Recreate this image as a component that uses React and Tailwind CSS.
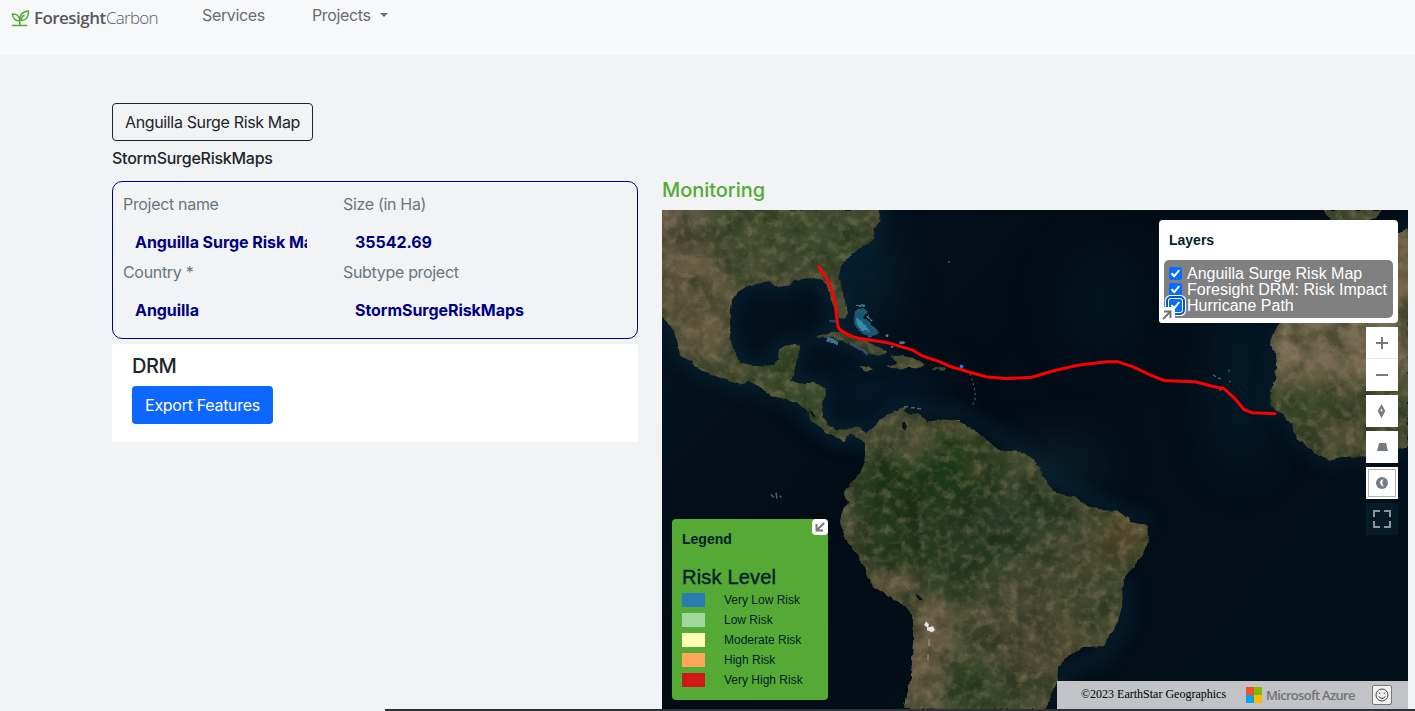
import React from "react";

const NORTH_AMERICA =
  "M655 205 L876 205 L880 212 L879 222 L874 230 L873 240 L862 247 L850 256 L841 266 L839 276 L842 290 L846 303 L848 313 L844 319 L838 318 L835 309 L831 301 L830 293 L826 285 L820 280 L812 278 L805 279 L795 281 L788 286 L778 287 L767 282 L757 284 L748 286 L738 292 L732 300 L731 310 L730 325 L731 340 L736 354 L742 363 L752 366 L765 367 L773 365 L778 360 L779 350 L785 346 L795 344 L801 345 L799 352 L796 363 L794 372 L791 381 L800 384 L812 383 L820 385 L825 391 L824 400 L822 410 L824 419 L829 427 L838 431 L848 429 L858 427 L867 433 L870 442 L866 446 L860 438 L850 434 L844 442 L836 438 L827 434 L820 427 L812 423 L807 412 L797 403 L783 399 L770 396 L760 387 L748 381 L740 385 L720 378 L700 370 L690 361 L680 356 L677 340 L670 325 L655 310 Z";
const SOUTH_AMERICA =
  "M864 434 L873 429 L880 420 L889 415 L899 409 L905 407 L904 413 L920 415 L928 422 L944 420 L962 422 L973 430 L982 437 L991 444 L999 451 L1017 452 L1030 457 L1040 467 L1043 477 L1048 485 L1057 494 L1075 497 L1087 507 L1105 511 L1117 511 L1133 523 L1147 527 L1149 542 L1142 557 L1131 570 L1123 580 L1122 607 L1117 626 L1108 639 L1103 647 L1083 648 L1069 656 L1058 668 L1057 683 L1045 711 L904 711 L911 678 L913 643 L913 617 L905 606 L890 598 L873 587 L865 569 L857 554 L846 541 L840 523 L842 512 L848 503 L844 495 L850 484 L860 474 L865 462 L865 448 Z";
const AFRICA =
  "M1284 318 L1277 327 L1271 338 L1270 346 L1275 352 L1276 368 L1275 382 L1270 392 L1271 407 L1282 415 L1292 425 L1296 439 L1308 448 L1318 455 L1331 461 L1346 457 L1365 457 L1388 450 L1410 448 L1410 228 L1394 234 L1370 240 L1320 245 Z";
const IBERIA = "M1322 205 L1326 216 L1336 222 L1366 222 L1378 215 L1386 205 Z";
const CUBA =
  "M817 338 L823 334 L833 332 L846 333 L856 337 L868 342 L880 348 L887 353 L878 356 L865 353 L857 347 L845 342 L832 338 Z";
const HISPANIOLA =
  "M891 356 L901 356 L913 358 L925 365 L920 368 L909 367 L901 370 L887 367 L898 364 Z";
const ISLANDS =
  "M859 367 L868 366 L873 370 L864 371 Z M934 367 L946 368 L944 371 L933 370 Z";

const HURRICANE =
  "M819 267 L827 279 L831 288 L835 303 L836 312 L838 327 L840 330 L850 336 L861 339 L888 343 L912 350 L922 356 L940 362 L951 367 L968 372 L986 377 L1007 379 L1032 377.500 L1054 371 L1078 365.500 L1107 362 L1118 362 L1133 367 L1150 375 L1165 381 L1195 382 L1212 386.500 L1224 389 L1235 399 L1244 410 L1252 413 L1275 414";

const patches = [
  [670, 250, 50, 60, "#665943", 0.75],
  [700, 310, 32, 50, "#706149", 0.7],
  [680, 225, 24, 26, "#6b5e4e", 0.6],
  [770, 225, 70, 32, "#434f31", 0.6],
  [835, 245, 40, 26, "#3a492c", 0.65],
  [770, 380, 50, 18, "#48522f", 0.7],
  [812, 400, 24, 26, "#354a28", 0.8],
  [785, 360, 20, 16, "#354827", 0.8],
  [935, 480, 70, 45, "#1c3a19", 0.95],
  [900, 520, 50, 55, "#20381a", 0.9],
  [955, 540, 60, 50, "#26391f", 0.8],
  [1020, 520, 55, 40, "#293b26", 0.8],
  [910, 448, 25, 14, "#645b43", 0.8],
  [955, 428, 30, 8, "#5f5739", 0.7],
  [980, 468, 8, 7, "#97785a", 0.9],
  [1000, 610, 60, 35, "#4f4d37", 0.75],
  [1040, 650, 50, 35, "#4c4833", 0.75],
  [1070, 560, 40, 40, "#474931", 0.7],
  [1125, 535, 22, 26, "#635235", 0.85],
  [930, 650, 24, 65, "#70604a", 0.9],
  [893, 582, 34, 13, "#6e5f48", 0.85],
  [970, 690, 32, 30, "#314226", 0.8],
  [955, 592, 40, 12, "#304023", 0.8],
  [858, 540, 8, 28, "#615a46", 0.8],
  [1340, 350, 75, 40, "#7d6e57", 0.95],
  [1330, 385, 55, 12, "#565338", 0.7],
  [1305, 410, 40, 24, "#384728", 0.9],
  [1355, 430, 50, 22, "#4f4e33", 0.8],
  [1395, 270, 40, 50, "#7a694d", 0.9],
];

const legend = [
  ["Very Low Risk", "bg-[#2b7bb5]"],
  ["Low Risk", "bg-[#a0d99b]"],
  ["Moderate Risk", "bg-[#ffffb5]"],
  ["High Risk", "bg-[#fea658]"],
  ["Very High Risk", "bg-[#d01719]"],
];

function Satellite() {
  return (
    <svg className="block h-full w-full" viewBox="662 210 746 500" preserveAspectRatio="none">
      <defs>
        <clipPath id="land">
          {[NORTH_AMERICA, SOUTH_AMERICA, AFRICA, IBERIA, CUBA, HISPANIOLA, ISLANDS].map((d) => (
            <path key={d} d={d} />
          ))}
        </clipPath>
        <filter id="soft" x="-50%" y="-50%" width="200%" height="200%" colorInterpolationFilters="sRGB">
          <feGaussianBlur stdDeviation="9" />
        </filter>
        <filter id="haze" filterUnits="userSpaceOnUse" x="600" y="150" width="870" height="620" colorInterpolationFilters="sRGB">
          <feGaussianBlur stdDeviation="22" />
        </filter>
        <filter id="shelf" x="-20%" y="-20%" width="140%" height="140%" colorInterpolationFilters="sRGB">
          <feGaussianBlur stdDeviation="8" />
        </filter>
        <filter id="rough" x="-5%" y="-5%" width="110%" height="110%" colorInterpolationFilters="sRGB">
          <feTurbulence type="fractalNoise" baseFrequency="0.14" numOctaves="3" seed="4" />
          <feDisplacementMap in="SourceGraphic" scale="4" xChannelSelector="R" yChannelSelector="G" />
        </filter>
        <filter id="light" x="0" y="0" width="100%" height="100%" colorInterpolationFilters="sRGB">
          <feTurbulence type="fractalNoise" baseFrequency="0.11" numOctaves="5" seed="11" />
          <feColorMatrix values="0 0 0 0 0.62  0 0 0 0 0.56  0 0 0 0 0.43  2.2 0 0 0 -0.95" />
        </filter>
        <filter id="dark" x="0" y="0" width="100%" height="100%" colorInterpolationFilters="sRGB">
          <feTurbulence type="fractalNoise" baseFrequency="0.04" numOctaves="6" seed="27" />
          <feColorMatrix values="0 0 0 0 0.08  0 0 0 0 0.14  0 0 0 0 0.06  0 2.6 0 0 -1" />
        </filter>
        <linearGradient id="sea" x1="0" y1="0" x2="1" y2="0.6">
          <stop offset="0" stopColor="#041522" />
          <stop offset="0.45" stopColor="#020c16" />
          <stop offset="0.7" stopColor="#020e18" />
          <stop offset="1" stopColor="#02101b" />
        </linearGradient>
      </defs>
      <rect x="662" y="210" width="746" height="500" fill="url(#sea)" />
      <g filter="url(#haze)">
        <ellipse cx="1100" cy="300" rx="45" ry="60" fill="#03202c" opacity="0.35" />
        <ellipse cx="880" cy="392" rx="70" ry="22" fill="#062036" opacity="0.7" />
        <ellipse cx="865" cy="275" rx="28" ry="50" fill="#0a2b3d" opacity="0.6" />
        <ellipse cx="1055" cy="465" rx="50" ry="18" fill="#12303c" opacity="0.7" />
        <ellipse cx="1240" cy="380" rx="30" ry="90" fill="#041c2b" opacity="0.8" />
      </g>
      <g filter="url(#shelf)" fill="none" stroke="#0b2636" strokeWidth="14" opacity="0.65">
        <path d={NORTH_AMERICA} />
        <path d={AFRICA} opacity="0.7" />
        <path d={CUBA} />
        <path d="M865 433 L900 407 L960 414 L1015 446 L1055 480 L1095 501 L1150 525" />
        <path d="M1125 580 L1125 620 L1105 655 L1065 670 L1055 705" />
      </g>
      <g filter="url(#rough)">
        <g clipPath="url(#land)">
          <rect x="662" y="210" width="746" height="500" fill="#474d33" />
          <g filter="url(#soft)">
            {patches.map(([cx, cy, rx, ry, fill, opacity], i) => (
              <ellipse key={i} cx={cx} cy={cy} rx={rx} ry={ry} fill={fill} opacity={opacity} />
            ))}
          </g>
          <rect x="662" y="210" width="746" height="500" filter="url(#dark)" opacity="0.45" />
          <rect x="662" y="210" width="746" height="500" filter="url(#light)" opacity="0.4" />
        </g>
        <path d="M855 310 L862 308 L867 312 L863 318 L870 323 L877 330 L879 334 L870 337 L860 333 L854 324 Z" fill="#236784" opacity="0.8" />
        <path d="M856 318 L862 321 L869 332 L862 331 L857 326 Z" fill="#3d9fc5" opacity="0.75" />
        <path d="M856 305 L865 306 M867 316 L873 322" stroke="#438699" strokeWidth="2" />
        <path d="M850 344 L862 350 L867 354" stroke="#31598a" strokeWidth="2.500" fill="none" opacity="0.8" />
        <path d="M827 340 L838 343" stroke="#397687" strokeWidth="4" />
        <path d="M829 321 L838 322" stroke="#2b4878" strokeWidth="2.500" opacity="0.8" />
      </g>
      <g fill="#70999b" opacity="0.8">
        <circle cx="887" cy="336" r="1.500" />
        <ellipse cx="902" cy="343" rx="3" ry="1.500" />
        <circle cx="892" cy="347" r="1.200" />
        <circle cx="949" cy="262" r="1" opacity="0.6" />
      </g>
      <path d="M970 374 L973 383 L975 391 L975 400 L972 407" stroke="#4a594f" strokeWidth="1.300" strokeDasharray="2 3" fill="none" />
      <path d="M904 407 h4 M911 408 h4 M917 409 h4 M956 421 h4" stroke="#59644e" strokeWidth="1.500" />
      <circle cx="961.500" cy="367" r="2" fill="#287ee3" />
      <path d="M1213 375 l3 2 M1218 378 l3 1 M1229 370 v2 M1230 381 v2 M1219 390 h3" stroke="#58636a" strokeWidth="1.300" />
      <path d="M771 495 l3 3 M776 493 l1 6 M780 496 l1 2" stroke="#52605e" strokeWidth="1.600" />
      <path d="M809 411 l3 1 4 5 -3 0 z M902 423 l3 -1 2 5 -2 4 -3 -3 z M915 595 l4 1 4 5 -4 0 z" fill="#0c1515" />
      <path d="M926 622 l3 3 -1 3 5 -1 2 4 -3 2 -5 -2 0 -3 -3 -2 z" fill="#e5e8e8" />
      <path d="M929 640 v7 M928 655 v6" stroke="#a6a292" strokeWidth="1.500" opacity="0.7" />
      <path d={HURRICANE} fill="none" stroke="#ff0000" strokeWidth="3" strokeLinecap="round" strokeLinejoin="round" />
    </svg>
  );
}

function Logo() {
  return (
    <div className="flex h-[20px] items-center">
      <svg className="mr-[4px] ml-px h-[17px] w-[19px]" viewBox="0 0 19 18" fill="none" stroke="#4fab32" strokeWidth="1.600" strokeLinecap="round" strokeLinejoin="round">
        <path d="M1 16.300 H16 M8.700 16 V10.200 M8.700 11.300 C5 12 1.200 9.500 1 4.200 C5.500 3.900 8.600 6.500 8.700 11.300 M8.900 11 C8.500 4.800 12 1.300 18 1 C18.100 7 15.500 11.200 11 11 C9.500 9.600 11 6.800 13.300 5.600" />
      </svg>
      <span className="w-[72px] font-['Open_Sans',sans-serif] text-[17px] leading-5 font-semibold tracking-[-0.55px] text-[#58595b]">Foresight</span>
      <span className="font-['Open_Sans',sans-serif] text-[17px] leading-5 font-light tracking-[-0.75px] text-[#58595b]">Carbon</span>
    </div>
  );
}

function Field({ label, value, className }) {
  return (
    <div className={className}>
      <div className="h-6 text-[#6c757d] tracking-[-0.32px]">{label}</div>
      <div className="mt-[7px] ml-3 h-[37px] overflow-hidden pt-[7px] font-bold whitespace-nowrap text-[#000080] tracking-[-0.05px]">{value}</div>
    </div>
  );
}

function Check({ label, focused }) {
  return (
    <label className="flex h-4 items-center">
      <span className={focused ? "flex size-[13px] rounded-[2px] bg-[#0a6cff] outline-[2px] outline-offset-[1px] outline-[#0755c9] ring-[4px] ring-white" : "flex size-[13px] rounded-[2px] bg-[#0a6cff]"}>
        <svg viewBox="0 0 13 13" className="size-[13px]" fill="none" stroke="#fff" strokeWidth="2" strokeLinecap="round" strokeLinejoin="round">
          <path d="M3 6.800 5.300 9.200 9.800 3.700" />
        </svg>
      </span>
      <span className="ml-[5px] pt-[2px] whitespace-nowrap">{label}</span>
    </label>
  );
}

function Controls() {
  return (
    <div className="absolute top-[117px] right-[10px] flex w-8 flex-col gap-1">
      <div className="bg-white">
        <div className="flex h-8 items-center justify-center border-b border-[#e8e8e8]">
          <svg className="size-4" viewBox="0 0 16 16" stroke="#757b80" strokeWidth="2"><path d="M2 8H14M8 2V14" /></svg>
        </div>
        <div className="flex h-8 items-center justify-center">
          <svg className="size-4" viewBox="0 0 16 16" stroke="#757b80" strokeWidth="2"><path d="M2 8H14" /></svg>
        </div>
      </div>
      <div className="flex h-8 items-center justify-center bg-white">
        <svg className="size-4" viewBox="0 0 16 16"><path d="M7.500 1 11.300 8 7.500 15 3.700 8Z M7.500 5.500 6.200 8.300H8.800Z" fillRule="evenodd" fill="#757b80" /></svg>
      </div>
      <div className="flex h-8 items-center justify-center bg-white">
        <svg className="size-4" viewBox="0 0 16 16"><path d="M5 4H12L14 12H3Z" fill="#757b80" /></svg>
      </div>
      <div className="flex h-8 bg-white p-[2px]">
        <div className="flex flex-1 items-center justify-center border border-[#b3b3b3]">
          <svg className="size-4" viewBox="0 0 16 16"><circle cx="8" cy="8" r="6" fill="#757b80" /><path d="M9.800 4.300C6.800 4.500 5.600 6.800 6.500 9 7.100 10.700 8.600 11.600 10 11.300 8.800 10.300 8.300 9.200 8.400 8 8.400 6.600 8.800 5.200 9.800 4.300Z" fill="#fff" /></svg>
        </div>
      </div>
      <div className="flex h-8 items-center justify-center bg-[#061a27]">
        <svg className="size-5" viewBox="0 0 20 20" fill="none" stroke="#8e9499" strokeWidth="2"><path d="M2 8V2H8M12 2H18V8M18 12V18H12M8 18H2V12" /></svg>
      </div>
    </div>
  );
}

export default function App() {
  return (
    <div className="flex h-[711px] w-[1415px] flex-col overflow-hidden bg-[#f1f3f5] font-['Inter',sans-serif] text-base leading-6 text-[#212529]">
      <header className="flex h-[55px] shrink-0 items-start bg-[#f7f8fa] pl-[10px] text-[#6a6b6d] tracking-[-0.35px]">
        <div className="w-48 pt-[8px]"><Logo /></div>
        <div className="w-[110px] pt-[3px]">Services</div>
        <div className="flex items-center pt-[3px]">
          Projects
          <span className="ml-[9px] border-x-[4px] border-t-[4px] border-x-transparent border-t-[#6a6b6d]" />
        </div>
      </header>
      <main className="flex min-h-0 flex-1 items-start gap-6 pl-[112px]">
        <section className="flex w-[526px] shrink-0 flex-col items-start pt-12">
          <button className="h-[38px] w-[201px] rounded-[4px] border border-[#212529] text-center whitespace-nowrap tracking-[-0.35px]">Anguilla Surge Risk Map</button>
          <div className="mt-[5px] h-6 font-medium tracking-[-0.25px]">StormSurgeRiskMaps</div>
          <div className="mt-[11px] flex h-[158px] w-full flex-wrap content-start rounded-[10px] border border-[#000080] px-[10px] pt-[10px]">
            <Field className="w-[184px]" label="Project name" value="Anguilla Surge Risk Map" />
            <Field className="ml-9 w-[210px]" label="Size (in Ha)" value="35542.69" />
            <Field className="w-[184px]" label="Country *" value="Anguilla" />
            <Field className="ml-9 w-[210px]" label="Subtype project" value="StormSurgeRiskMaps" />
          </div>
          <div className="mt-[5px] h-[98px] w-full bg-white px-5 pt-[10px]">
            <div className="h-8 text-xl leading-6 font-medium tracking-[-0.5px]">DRM</div>
            <button className="h-[38px] w-[141px] rounded-[4px] bg-[#0d66fd] whitespace-nowrap text-white tracking-[-0.3px]">Export Features</button>
          </div>
        </section>
        <section className="w-[746px] shrink-0 pt-[123px]">
          <h2 className="h-8 text-xl leading-6 font-medium text-[#54ab36] tracking-[-0.05px]">Monitoring</h2>
          <div className="relative h-[499px] overflow-hidden font-['Liberation_Sans',Arial,sans-serif]">
            <Satellite />
            <div className="absolute top-[10px] right-[10px] h-[103px] w-[239px] rounded-[4px] bg-white px-[5px] pt-[10px]">
              <div className="h-[30px] pl-[5px] text-sm leading-5 font-bold text-[#051d2c]">Layers</div>
              <div className="h-[58px] rounded-[5px] bg-[#808080] px-[5px] pt-[5px] text-[16px] text-white">
                <Check label="Anguilla Surge Risk Map" />
                <Check label="Foresight DRM: Risk Impact" />
                <Check label="Hurricane Path" focused />
              </div>
              <div className="absolute bottom-0 left-0 flex size-4 items-center justify-center rounded-[3px] bg-white">
                <svg className="size-3" viewBox="0 0 12 12" fill="none" stroke="#757575" strokeWidth="2"><path d="M2 10 9 3M3 2.500H9.500V9" /></svg>
              </div>
            </div>
            <Controls />
            <div className="absolute bottom-[9px] left-[10px] h-[181px] w-[156px] rounded-[4px] bg-[#54aa35] px-[10px] pt-[10px] text-[#051d2c]">
              <div className="h-[36px] text-sm leading-5 font-bold">Legend</div>
              <div className="h-[25px] text-xl leading-6 font-normal tracking-[0.2px] [-webkit-text-stroke:0.4px_#051d2c]">Risk Level</div>
              {legend.map(([name, color]) => (
                <div key={name} className="flex h-5 items-center text-xs leading-5">
                  <span className={"mr-[19px] h-[14px] w-[23px] " + color} />
                  {name}
                </div>
              ))}
              <div className="absolute top-0 right-0 flex size-4 items-center justify-center rounded-[4px] bg-white">
                <svg className="size-3" viewBox="0 0 12 12" fill="none" stroke="#757575" strokeWidth="2"><path d="M10 2 3 9M2.500 3V9.500H9" /></svg>
              </div>
            </div>
            <div className="absolute right-0 bottom-0 flex h-7 w-[351px] items-center bg-[#c1c3c6] pl-6">
              <span className="w-[165px] pb-[2px] font-['Liberation_Serif',serif] text-xs whitespace-nowrap text-black">©2023 EarthStar Geographics</span>
              <span className="grid size-4 grid-cols-2">
                <i className="bg-[#f25022]" /><i className="bg-[#7fba00]" /><i className="bg-[#00a4ef]" /><i className="bg-[#ffb900]" />
              </span>
              <span className="ml-1 w-[106px] font-['Open_Sans',sans-serif] text-[13px] font-semibold whitespace-nowrap text-[#737373] tracking-[-0.7px]">Microsoft Azure</span>
              <span className="flex size-5 items-center justify-center rounded-[2px] border border-[#777] bg-[#f3f2f1]">
                <svg className="size-[14px]" viewBox="0 0 14 14" fill="none" stroke="#444" strokeWidth="1"><circle cx="7" cy="7" r="6" /><path d="M3.800 8.300C4.800 11 9.200 11 10.200 8.300M4.800 4.500V6M9.200 4.500V6" /></svg>
              </span>
            </div>
          </div>
        </section>
      </main>
      <div className="ml-[385px] h-[2px] shrink-0 bg-[#303136]" />
    </div>
  );
}
